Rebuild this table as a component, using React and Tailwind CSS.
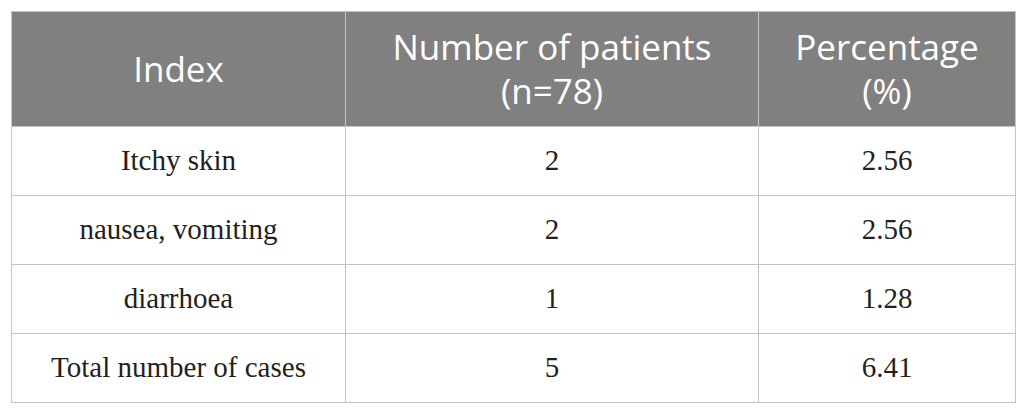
const rows = [
    { index: "Itchy skin", count: "2", pct: "2.56" },
    { index: "nausea, vomiting", count: "2", pct: "2.56" },
    { index: "diarrhoea", count: "1", pct: "1.28" },
    { index: "Total number of cases", count: "5", pct: "6.41" },
];

const App = () => {
    return (
        <div className="w-[1025px] h-[414px] bg-white pt-[11px] pl-[11px]">
            <table className="w-[1004px] border-collapse border border-[#c4c4c4] table-fixed">
                <colgroup>
                    <col className="w-[334px]" />
                    <col className="w-[413px]" />
                    <col className="w-[257px]" />
                </colgroup>
                <thead>
                    <tr className="h-[115px] bg-[#808080] text-white text-[35px] leading-[44px] font-['Open_Sans',sans-serif]">
                        <th className="font-normal border-r border-[#c4c4c4] text-center">Index</th>
                        <th className="font-normal border-r border-[#c4c4c4] text-center">
                            Number of patients
                            <br />
                            (n=78)
                        </th>
                        <th className="font-normal text-center">
                            Percentage
                            <br />
                            (%)
                        </th>
                    </tr>
                </thead>
                <tbody className="text-[#231f20] text-[29px] font-['Liberation_Serif',serif]">
                    {rows.map((row) => (
                        <tr key={row.index} className="h-[69px] border-t border-[#c4c4c4]">
                            <td className="text-center border-r border-[#c4c4c4]">{row.index}</td>
                            <td className="text-center border-r border-[#c4c4c4]">{row.count}</td>
                            <td className="text-center">{row.pct}</td>
                        </tr>
                    ))}
                </tbody>
            </table>
        </div>
    );
};

export default App;
